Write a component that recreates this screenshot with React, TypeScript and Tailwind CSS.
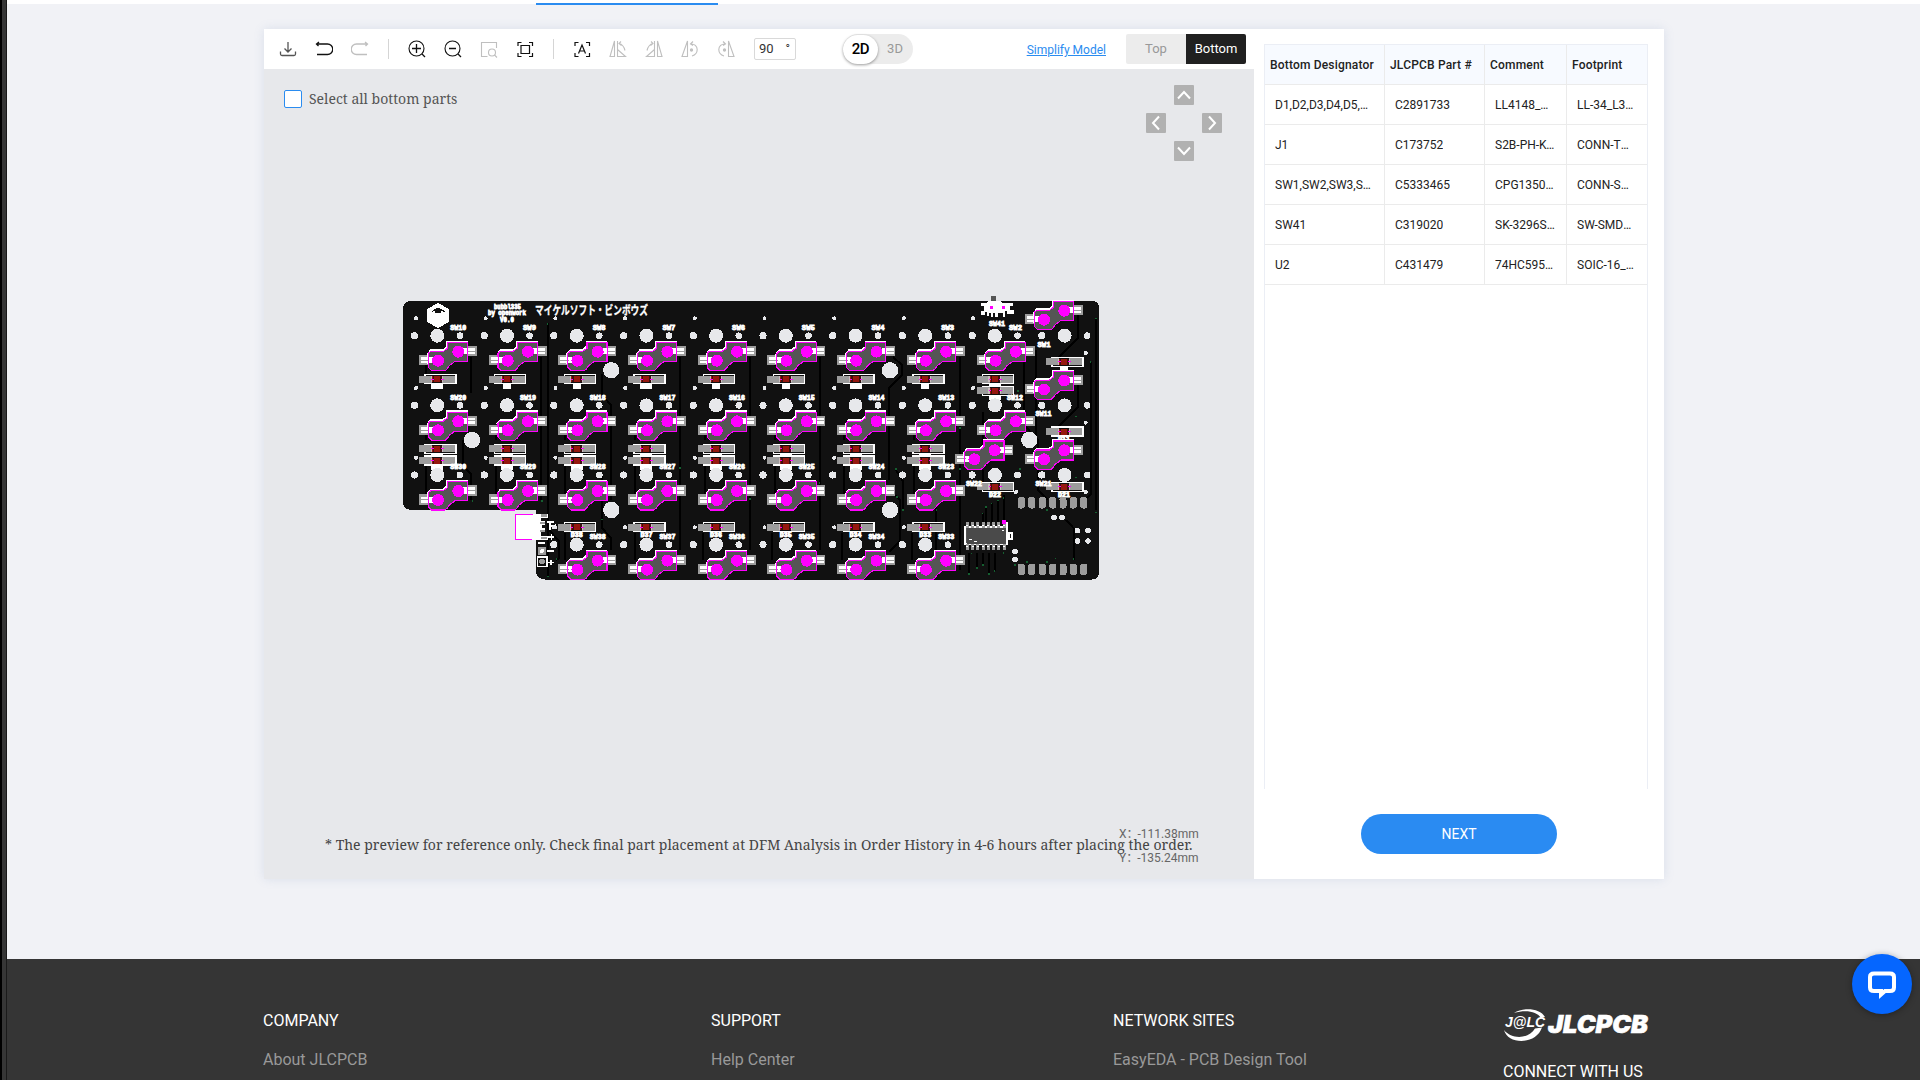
import React from "react";

const COL0 = 437.3;
const ROW0 = 335.7;
const PITCH = 69.7;
const colX = (c: number) => COL0 + PITCH * c;
const rowY = (r: number) => ROW0 + 69.65 * r;

const HOLE = "#e7e8eb";
const PAD = "#9c9c9c";
const MAGENTA = "#ff00ff";

/* Hot-swap socket, origin at the key's centre hole */
function Socket({ x, y }: { x: number; y: number }) {
  return (
    <g transform={`translate(${x} ${y})`}>
      <rect x={-18.3} y={19.3} width={12} height={10.3} fill={PAD} />
      <rect x={30} y={10.3} width={9.7} height={10.3} fill={PAD} />
      <path d="M10 17V6H30.500M-9.500 28V18.500L-6.500 14.700H6L9.500 11.500" fill="none" stroke="#fff" strokeWidth={2} />
      <path d="M10.300 6.700H30.300V25.700H17.700L12 30L10 33L7.700 35H-5.700L-9 31.700V17.700L-6.700 15.700H6L10.300 12.500Z" fill="#555" stroke={MAGENTA} strokeWidth={1.1} />
      <path d="M-16.300 21.700H0V27.700H-16.300Z M26 12.300H38V18.700H26Z" fill="#fff" />
      <path d="M-16.300 24.700H-8M31 15.600H38" stroke={PAD} strokeWidth={1} />
      <path d="M30.300 12V20M-9 20V30" stroke={MAGENTA} strokeWidth={1} />
      <circle cx={0.7} cy={25} r={6} fill={MAGENTA} />
      <circle cx={21} cy={16} r={6} fill={MAGENTA} />
    </g>
  );
}

function Holes({ x, y }: { x: number; y: number }) {
  return (
    <g fill={HOLE}>
      <circle cx={x} cy={y} r={7} />
      <circle cx={x - 22.8} cy={y} r={3.6} />
      <circle cx={x + 22.6} cy={y} r={3.3} />
    </g>
  );
}

function Diode({ x, y }: { x: number; y: number }) {
  return (
    <g transform={`translate(${x} ${y})`}>
      <rect x={-12.3} y={-4.5} width={31} height={9} fill="#111" stroke="#fff" strokeWidth={1.4} />
      <rect x={-18.3} y={-3.3} width={13} height={6.8} fill={PAD} />
      <rect x={5} y={-3.3} width={12.8} height={6.8} fill={PAD} />
      <rect x={-6.500} y={-3} width={12.500} height={6} fill="#c9bcbc" />
      <rect x={-5.300} y={-3} width={10} height={6} fill="#96180f" />
      <rect x={-4.300} y={-3} width={1.300} height={6} fill="#3c1010" />
      <rect x={3} y={-3} width={2} height={6} fill="#3c1010" />
      <path d="M-6 0H-3.500M4 0H6.800" stroke={MAGENTA} strokeWidth={1} />
    </g>
  );
}

function Silk({ x, y, w, children, size = 8 }: { x: number; y: number; w: number; size?: number; children: string }) {
  return (
    <text x={x} y={y} textLength={w} lengthAdjust="spacingAndGlyphs" fontSize={size} fontWeight={700} fill="#fff" stroke="#fff" strokeWidth={0.9} fontFamily="'Liberation Mono', monospace">
      {children}
    </text>
  );
}

const cols8 = [0, 1, 2, 3, 4, 5, 6, 7];
const colsLow = [2, 3, 4, 5, 6, 7];
const pinX = [0, 1, 2, 3, 4, 5, 6, 7].map((i) => 967.3 + i * 5.28);
const padX = [1021.3, 1031.7, 1042.3, 1052.7, 1063, 1073.3, 1083.7];

const vias: [number, number][] = [
  [1015, 424], [1017.7, 390.7], [1096, 318.3], [1090.5, 362], [1076, 416.5], [1020, 469], [1076, 477.5], [1047, 510],
  [1096, 512.5], [1073.5, 559], [1055.5, 558.5], [1047, 562], [1026.7, 562], [1015, 565], [982.5, 513.500], [986, 507], [991.5, 503.5],
  [998, 500.5], [1003.5, 498], [968.7, 574], [977, 568], [983, 565], [989, 574], [994.5, 571], [1003.5, 553], [971.5, 553.5],
  [960, 469], [960, 428], [472.500, 501], [542, 501], [602, 519.3], [556.5, 559], [548, 576.5], [547.6, 324], [680, 468], [750, 499],
  [819.500, 483], [896, 469], [897, 497], [903, 510], [936.5, 510],
];

function Board() {
  return (
    <svg width={990} height={810} viewBox="264 69 990 810" className="block" shapeRendering="crispEdges">
      <path d="M409 301H1093Q1099 302 1099 308V573Q1098 579.500 1092 579.500H545Q537 579 536 572V509.700H410Q404 509 403 504V307Q404 302 409 301Z" fill="#111" />
      <g fill="none" stroke="#000" strokeWidth={2}>
        <path d="M548 323V577M471 357V393M426 365V375M463 440V466L471 474V500M541 357V500M602 374V395L611 405V500M602 475V528L611 538V550" />
        <path d="M680 357V550M750 357V550M820 357V550M893 357L902 365V375L889 388V480M896 470L903 481V510M889 490L900 500V541L889 552M960 357V570M936 480V570" />
        <path d="M705 360V366M775 360V366M844 360V366M914 360V366M426 427V440M496 427V440M565 427V440M635 427V440M705 427V440M775 427V440M844 427V440M914 427V440" />
        <path d="M565 533V560M635 533V560M703 533V560M772 533V560M842 533V560M912 533V560M426 463V500M496 463V500M565 463V500M635 463V500M705 463V500M775 463V500M844 463V500M914 463V500" />
        <path d="M1078 315V338L1058 358M1078 385V407L1058 427M1024 357V425L1038 440V490L1048 500M1091 362V494L1082 503M1096 318V510M1036 350V440M1066 520L1073.500 528V560M983 470V482M983 412V450M960 425L940 428" />
        <path d="M968.700 553V574M977 553V568M983 553V565M989 553V574M994.500 553V571M1003.500 495V523M998 500V523M991.500 503V523M986 507V523M982.500 513V523M549 530L559 541V558L556 560" />
      </g>
      {vias.map(([x, y], i) => (
        <rect key={i} x={x - 0.7} y={y - 0.7} width={1.5} height={1.5} fill="#155f30" />
      ))}

      <g fill={HOLE}>
        {[[611.3, 370.3], [472, 440], [611.3, 510], [890, 370.3], [890, 510], [1029.3, 440]].map(([x, y]) => (
          <circle key={`${x}-${y}`} cx={x} cy={y} r={8.2} />
        ))}
        {cols8.map((c) => [318.3, 388, 457.8].map((y) => <circle key={`${c}-${y}`} cx={colX(c) - 21.3} cy={y} r={2} />))}
        {colsLow.map((c) => <circle key={c} cx={colX(c) - 21.3} cy={527.3} r={2} />)}
        {[[973, 318.3], [973, 388], [1016, 492], [1085.700, 353], [1085.700, 422.700], [1085.700, 492]].map(([x, y]) => (
          <circle key={`${x}-${y}`} cx={x} cy={y} r={2} />
        ))}
        {[[1054, 517.7], [1062, 517.7], [1077.3, 530.7], [1088, 530.7], [1077.3, 541], [1088, 541], [1015, 551.5], [1015, 559.5]].map(([x, y]) => (
          <circle key={`${x}-${y}`} cx={x} cy={y} r={2.8} />
        ))}
      </g>

      {cols8.map((c) => (
        <g key={c}>
          <Diode x={colX(c)} y={379.2} />
          <rect x={colX(c) - (c % 3 === 0 ? 6 : 4)} y={384} width={c % 3 === 0 ? 12 : 8} height={4.8} fill="#fff" />
          <Diode x={colX(c)} y={448.8} />
          <rect x={colX(c) - 6} y={453.5} width={12} height={2.8} fill="#fff" />
          <Diode x={colX(c)} y={460.5} />
          <rect x={colX(c) - 6} y={465} width={12} height={4.5} fill="#fff" />
        </g>
      ))}
      {colsLow.map((c) => (
        <g key={c}>
          <Diode x={colX(c)} y={527.3} />
          <Silk x={colX(c) - 6} y={536.5} w={12} size={7}>{`D${40 - c}`}</Silk>
        </g>
      ))}
      <Diode x={994.9} y={379.2} />
      <Diode x={994.9} y={390.8} />
      <rect x={989} y={384} width={12} height={3} fill="#fff" />
      <rect x={989} y={395} width={12} height={4.500} fill="#fff" />
      <Diode x={994.9} y={486.7} />
      <Silk x={989} y={496.500} w={12} size={7}>D22</Silk>
      <Diode x={1064.3} y={361.7} />
      <rect x={1060} y={366.500} width={7.500} height={4.500} fill="#fff" />
      <Diode x={1064.3} y={431.5} />
      <Silk x={1058} y={441} w={12} size={7}>D11</Silk>
      <Diode x={1064.3} y={486.7} />
      <Silk x={1058} y={496.500} w={12} size={7}>D21</Silk>

      {cols8.map((c) => [0, 1, 2].map((r) => <Holes key={`${c}-${r}`} x={colX(c)} y={rowY(r)} />))}
      {colsLow.map((c) => <Holes key={c} x={colX(c)} y={rowY(3)} />)}
      {[8, 9].map((c) => [0, 1, 2].map((r) => <Holes key={`${c}-${r}`} x={colX(c)} y={rowY(r)} />))}

      {cols8.map((c) => [0, 1, 2].map((r) => <Socket key={`${c}-${r}`} x={colX(c)} y={rowY(r)} />))}
      {colsLow.map((c) => <Socket key={c} x={colX(c)} y={rowY(3)} />)}
      <Socket x={994.9} y={ROW0} />
      <Socket x={994.9} y={rowY(1)} />
      <Socket x={973.7} y={434.3} />
      {[294.700, 364.500, 434.300].map((y) => <Socket key={y} x={1043.3} y={y} />)}

      {cols8.map((c) =>
        [0, 1, 2].map((r) => {
          const n = 10 - c + r * 10;
          const w = n < 10 ? 13 : 16;
          return <Silk key={`${c}-${r}`} x={colX(c) + 29 - w} y={rowY(r) - 5.7} w={w}>{`SW${n}`}</Silk>;
        }),
      )}
      {colsLow.map((c) => <Silk key={c} x={colX(c) + 13} y={538.8} w={16}>{`SW${40 - c}`}</Silk>)}
      <Silk x={1009} y={330} w={13}>SW2</Silk>
      <Silk x={1007} y={399.500} w={16}>SW12</Silk>
      <Silk x={1037.500} y={346.500} w={13}>SW1</Silk>
      <Silk x={1035.500} y={416} w={16}>SW11</Silk>
      <Silk x={1035.500} y={485.500} w={16}>SW21</Silk>
      <Silk x={966} y={485.500} w={16}>SW22</Silk>
      <Silk x={989} y={325.500} w={16}>SW41</Silk>

      <path d="M438 303L449 309V322L438 328L427 322V309Z" fill="#fff" />
      <path d="M431 312Q438 304 445 312Q438 309 431 312ZM435 311H441V313H435Z" fill="#111" />
      <Silk x={494} y={308.800} w={27} size={7.500}>bubbl335</Silk>
      <Silk x={488} y={315} w={38} size={7.500}>by openwork</Silk>
      <Silk x={500} y={321.700} w={14} size={7.500}>V0.0</Silk>
      <text x={535} y={315} textLength={113} lengthAdjust="spacingAndGlyphs" fontSize={12} fontWeight={700} fill="#fff" stroke="#fff" strokeWidth={0.3} fontFamily="'Noto Sans CJK JP', sans-serif">
        マイケルソフト・ビンボウズ
      </text>

      {/* power switch */}
      <rect x={991} y={296} width={5} height={6} fill="#555" />
      <path d="M981 303H986L989 301H1000L1003 303H1013V306H1010V310H1014V314H1007V311H1005V317H1003V313H998V317H995V313H993V317H991V313H989V316H987V312H985V315H981V311H984V306H981Z" fill="#fff" />
      <rect x={989.5} y={306} width={3} height={3} fill={MAGENTA} />
      <rect x={1002} y={306} width={3} height={3} fill={MAGENTA} />

      {/* battery connector */}
      <path d="M533 514H548V518H541V521H545V525H542V528H545V532H541V536H548V540H533Z" fill="#fff" />
      <rect x={515.500} y={514.500} width={20} height={25} fill="#fff" />
      <path d="M533 514.500H515.500V539.500H532" fill="none" stroke={MAGENTA} />
      <path d="M541 515.500H547M540 523H545M540 531H545M541 538H547" stroke={PAD} strokeWidth={2.5} />
      <path d="M547 522H554M550 522V530M549 527L556 525M547 537H554M551.500 534V540M538 543H545M547 551H554M547 562.500H554M551 560V565" stroke="#fff" strokeWidth={1.6} />
      <rect x={538} y={547} width={8} height={8} fill={PAD} />
      <rect x={537.500} y={557} width={9.500} height={9.500} fill="#111" stroke="#fff" strokeWidth={1.3} />
      <circle cx={542} cy={551} r={2} fill="#fff" />
      <circle cx={542} cy={561.500} r={3} fill={PAD} />
      <circle cx={553.500} cy={527.300} r={2} fill={HOLE} />

      {/* shift register */}
      <path d="M965 527H1007V544H965Z" fill="#555" stroke="#fff" strokeWidth={1.3} />
      <path d="M1007 522V545M1009 533H1012V539H1009Z" fill="none" stroke="#fff" strokeWidth={1.8} />
      <rect x={966.5} y={528} width={39} height={15.500} fill="#4a4a4a" />
      {pinX.map((x) => (
        <g key={x}>
          <rect x={x - 1.500} y={522.300} width={3} height={5.500} fill={PAD} />
          <rect x={x - 1.500} y={544} width={3} height={5.500} fill={PAD} />
          <path d={`M${x - 1} 525.500h2M${x - 1} 546.500h2`} stroke="#fff" />
        </g>
      ))}
      <path d="M969 539.500H972M974 541H977M1002 530.500H1004" stroke="#fff" />
      <circle cx={1004} cy={522} r={2.200} fill={MAGENTA} />

      {padX.map((x) => (
        <g key={x} fill={PAD}>
          <rect x={x - 3.500} y={497} width={7} height={11.500} rx={2.500} />
          <rect x={x - 3.500} y={563.500} width={7} height={11.500} rx={2.500} />
        </g>
      ))}
    </svg>
  );
}

function Icon({ children, dim = false, className = "" }: { children: React.ReactNode; dim?: boolean; className?: string }) {
  return (
    <svg width={18} height={18} viewBox="0 0 18 18" fill="none" strokeWidth={1.1} className={`shrink-0 ${dim ? "stroke-[#bfbfbf]" : "stroke-[#111]"} ${className}`}>
      {children}
    </svg>
  );
}

const MirrorTriangles = () => (
  <>
    <path d="M5.500 1V16.500H1Z" />
    <path d="M8.500 1V17M8.500 9.500L16.500 16.500H8.500" />
    <path d="M10 3.500Q14.500 4.500 16 10.500M12 1.500L10 3.500L12.500 5.500" />
  </>
);

const RotateMark = () => (
  <>
    <path d="M6.500 1V16.500H1Z" />
    <path d="M9.500 4C13.500 3.500 16.200 6.500 16.200 9.500S14 15 11 16M12 1.500L9.500 4L12 5.500" />
    <circle cx="10.500" cy="10" r="1.100" fill="#bfbfbf" />
  </>
);

function Toolbar() {
  return (
    <div className="flex h-10 items-center bg-white pl-[15px] pr-2">
      <div className="flex items-center gap-[18px]">
        <Icon className="-mt-px">
          <path d="M9 2V12M5.500 8.500L9 12L12.500 8.500M1.500 11.500V14Q1.500 15.500 3 15.500H15Q16.500 15.500 16.500 14V11.500" strokeWidth={1.300} stroke="#555" />
        </Icon>
        <Icon className="-mt-px"><path d="M4 2L1.500 4L3.500 6M1.500 4H12.500A4.900 4.900 0 0 1 12.500 14.500H2" strokeWidth={1.300} /></Icon>
        <Icon dim className="-mt-px"><path d="M14 2L16.500 4L14.500 6M16.500 4H5.500A4.900 4.900 0 0 0 5.500 14.500H16" strokeWidth={1.300} /></Icon>
      </div>
      <div className="ml-[19px] h-5 w-px bg-[#d5d5d5]" />
      <div className="-mt-px ml-[19px] flex items-center gap-[18px]">
        <Icon><circle cx="8.500" cy="8.500" r="7.500" /><path d="M14 14L17 17M4 8.500H13M8.500 4V13" strokeWidth={1.300} /></Icon>
        <Icon><circle cx="8.500" cy="8.500" r="7.500" /><path d="M14 14L17 17M5 8.500H12" strokeWidth={1.300} /></Icon>
        <Icon dim><path d="M7.500 16.500H1.500V2.500H16.500V8" /><circle cx="12" cy="12.500" r="3.500" /><path d="M14.500 15L17 17.500" /></Icon>
        <Icon><path d="M2 6V2.500H5.500M13 2.500H16.500V6M16.500 13V16.500H13M5.500 16.500H2V13M5 5.500H13.500V13.500H5Z" strokeWidth={1.200} /></Icon>
      </div>
      <div className="ml-[19px] h-5 w-px bg-[#d5d5d5]" />
      <div className="-mt-px ml-[19px] flex items-center gap-[18px]">
        <Icon><path d="M2 6V2.500H5.500M13 2.500H16.500V6M16.500 13V16.500H13M5.500 16.500H2V13M5.500 13.500L9 5L12.500 13.500M6.500 11H11.500" strokeWidth={1.200} /></Icon>
        <Icon dim><MirrorTriangles /></Icon>
        <Icon dim className="-scale-x-100"><MirrorTriangles /></Icon>
        <Icon dim><RotateMark /></Icon>
        <Icon dim className="-scale-x-100"><RotateMark /></Icon>
      </div>
      <div className="ml-[19px] flex h-[22px] w-[42px] items-center justify-between rounded-[2px] border border-[#d9d9d9] pl-1 pr-[5px] text-[13px] text-[#333]">
        <span>90</span>
        <span className="text-xs">°</span>
      </div>
      <div className="ml-[47px] flex h-[30px] w-[70px] items-center rounded-full bg-[#ececec] text-[13px]">
        <div className="flex h-[29px] w-[35px] items-center justify-center rounded-full bg-white text-[15px] font-medium tracking-[-0.3px] text-black shadow-[0_1px_3px_rgba(0,0,0,0.4)]">2D</div>
        <div className="flex-1 pr-px text-center text-[#999]">3D</div>
      </div>
      <a className="ml-auto pt-[2px] text-[12px] text-[#2a8cf0] underline">Simplify Model</a>
      <div className="ml-5 flex h-[30px] w-[120px] overflow-hidden rounded-[2px] text-[13px]">
        <div className="flex flex-1 items-center justify-center bg-[#ececec] pb-px text-[#999]">Top</div>
        <div className="flex flex-1 items-center justify-center bg-[#202020] pb-px text-white">Bottom</div>
      </div>
    </div>
  );
}

function Arrow({ d, className }: { d: string; className: string }) {
  return (
    <button className={`flex h-5 w-5 items-center justify-center rounded-[1px] bg-[#b1b1b1] ${className}`}>
      <svg width={20} height={20} viewBox="0 0 20 20" fill="none" stroke="#fff" strokeWidth={2}>
        <path d={d} />
      </svg>
    </button>
  );
}

const rows = [
  ["D1,D2,D3,D4,D5,D6,D7", "C2891733", "LL4148_C2891733", "LL-34_L3.5-W1.5"],
  ["J1", "C173752", "S2B-PH-K-S(LF)(SN)", "CONN-TH_S2B-PH-K"],
  ["SW1,SW2,SW3,SW4", "C5333465", "CPG135001S30", "CONN-SMD_CPG1350"],
  ["SW41", "C319020", "SK-3296S-01-L1", "SW-SMD_SK-3296S"],
  ["U2", "C431479", "74HC595D,118", "SOIC-16_L9.9-W3.9"],
];

function PartsTable() {
  const grid = "grid grid-cols-[120px_100px_82px_81px]";
  return (
    <div className="ml-[10px] h-[745px] w-[384px] border-x border-t border-[#ebeef5] text-xs text-[#222]">
      <div className={`${grid} h-10 w-[382px] overflow-hidden border-b border-[#ebebeb] bg-[#f7faff] font-medium`}>
        {["Bottom Designator", "JLCPCB Part #", "Comment", "Footprint"].map((h, i) => (
          <div key={h} className={`flex items-center whitespace-nowrap pl-[5px] tracking-[0.18px] ${i < 3 ? "border-r border-[#ebebeb]" : ""}`}>{h}</div>
        ))}
      </div>
      {rows.map((r) => (
        <div key={r[0]} className={`${grid} h-10 w-[382px] overflow-hidden border-b border-[#ebebeb]`}>
          {r.map((t, i) => (
            <div key={i} className={`flex min-w-0 items-center pl-[10px] ${i < 3 ? "border-r border-[#ebebeb] pr-[10px]" : "pr-[13.5px]"}`}>
              <span className="truncate">{t}</span>
            </div>
          ))}
        </div>
      ))}
    </div>
  );
}

function Logo() {
  return (
    <svg width={148} height={34} viewBox="0 0 148 34" className="block">
      <path d="M11 5C20 -1 37 0 42 9L38 10C34 3 22 1.500 11 5Z" fill="#fff" />
      <path d="M1 22C5 37 33 37 39 19.500L32 20.500C26 31 9 32 1 22Z" fill="#fff" />
      <text x="2" y="19" textLength="40" lengthAdjust="spacingAndGlyphs" fontSize="14.500" fontWeight="700" fontStyle="italic" fill="#fff" fontFamily="'Liberation Sans', sans-serif">J@LC</text>
      <text x="45" y="25" textLength="100" lengthAdjust="spacingAndGlyphs" fontSize="25" fontWeight="900" fontStyle="italic" fill="#fff" stroke="#fff" strokeWidth="0.6" fontFamily="Inter, 'Liberation Sans', sans-serif">JLCPCB</text>
    </svg>
  );
}

function FooterColumn({ title, link, className }: { title: string; link: string; className: string }) {
  return (
    <div className={`flex flex-col gap-[15px] pt-[50px] leading-6 ${className}`}>
      <div className="text-white">{title}</div>
      <div className="text-[#999]">{link}</div>
    </div>
  );
}

export default function App() {
  return (
    <div className="relative flex h-[1080px] w-[1920px] overflow-hidden bg-[#f1f2f6] font-['Roboto',sans-serif] text-base">
      <div className="h-full w-[7px] shrink-0 border-l-2 border-r border-l-black border-r-[#1a1a1a] bg-[#363636]" />
      <div className="flex min-w-0 flex-1 flex-col">
        <div className="flex h-[5px] shrink-0 items-end bg-[linear-gradient(#fff_4px,transparent_4px)]">
          <div className="ml-[529px] h-[2px] w-[182px] bg-[#2a8cf0]" />
        </div>
        <div className="ml-[257px] mt-6 flex h-[850px] w-[1400px] shrink-0 bg-white shadow-[0_0_10px_rgba(100,130,180,0.16)]">
          <div className="flex w-[990px] flex-col">
            <Toolbar />
            <div className="relative h-[810px] bg-[#e7e8eb]">
              <Board />
              <label className="absolute left-5 top-[21px] flex h-[18px] items-center gap-[7px] font-['Noto_Serif','DejaVu_Serif_Condensed','DejaVu_Serif',serif] text-[14px] text-[#555]">
                <span className="h-[18px] w-[18px] rounded-[2px] border border-[#2a8cf0] bg-white" />
                <span className="-mt-[2px]">Select all bottom parts</span>
              </label>
              <div className="absolute left-[882px] top-4 grid grid-cols-3 gap-2">
                <Arrow d="M4 13.500L10 7L16 13.500" className="col-start-2" />
                <Arrow d="M13 3.500L7 10L13 16.500" className="col-start-1 row-start-2" />
                <Arrow d="M7 3.500L13 10L7 16.500" className="col-start-3 row-start-2" />
                <Arrow d="M4 6.500L10 13L16 6.500" className="col-start-2 row-start-3" />
              </div>
              <div className="absolute left-[61px] top-[764px] whitespace-nowrap font-['Noto_Serif','DejaVu_Serif_Condensed','DejaVu_Serif',serif] text-[14px] leading-6 text-[#444]">
                * The preview for reference only. Check final part placement at DFM Analysis in Order History in 4-6 hours after placing the order.
              </div>
              <div className="absolute left-[855px] top-[753px] whitespace-pre font-['Roboto','Noto_Sans_CJK_SC',sans-serif] text-[12px] leading-6 text-[#666]">
                <div>X<span className="inline-block w-[11px]">：</span><span className="relative">{"-111.38mm"}</span></div>
                <div>Y<span className="inline-block w-[11px]">：</span><span className="relative">{"-135.24mm"}</span></div>
              </div>
            </div>
          </div>
          <div className="flex w-[410px] flex-col pt-[15px]">
            <PartsTable />
            <button className="ml-[107px] mt-[25px] h-10 w-[196px] rounded-full bg-[#2a8bf2] text-[14px] text-white">NEXT</button>
          </div>
        </div>
        <footer className="mt-20 flex flex-1 bg-[#353535] pl-[256px]">
          <FooterColumn title="COMPANY" link="About JLCPCB" className="w-[448px]" />
          <FooterColumn title="SUPPORT" link="Help Center" className="w-[402px]" />
          <FooterColumn title="NETWORK SITES" link="EasyEDA - PCB Design Tool" className="w-[390px]" />
          <div className="h-[121px] overflow-hidden pt-[49px]">
            <Logo />
            <div className="mt-[18px] leading-6 text-white">CONNECT WITH US</div>
          </div>
        </footer>
      </div>
      <button className="absolute left-[1852px] top-[954px] flex h-[60px] w-[60px] items-center justify-center rounded-full bg-[#0566ff] shadow-[0_1px_6px_rgba(0,0,0,0.35)]">
        <svg width={30} height={30} viewBox="0 0 30 30" fill="none" stroke="#fff" strokeWidth={4}>
          <path d="M7 4.500H23Q27 4.500 27 8V18.500Q27 22 23 22H18L14 25.500V22H7Q3 22 3 18.500V8Q3 4.500 7 4.500Z" strokeLinejoin="miter" />
        </svg>
      </button>
    </div>
  );
}
